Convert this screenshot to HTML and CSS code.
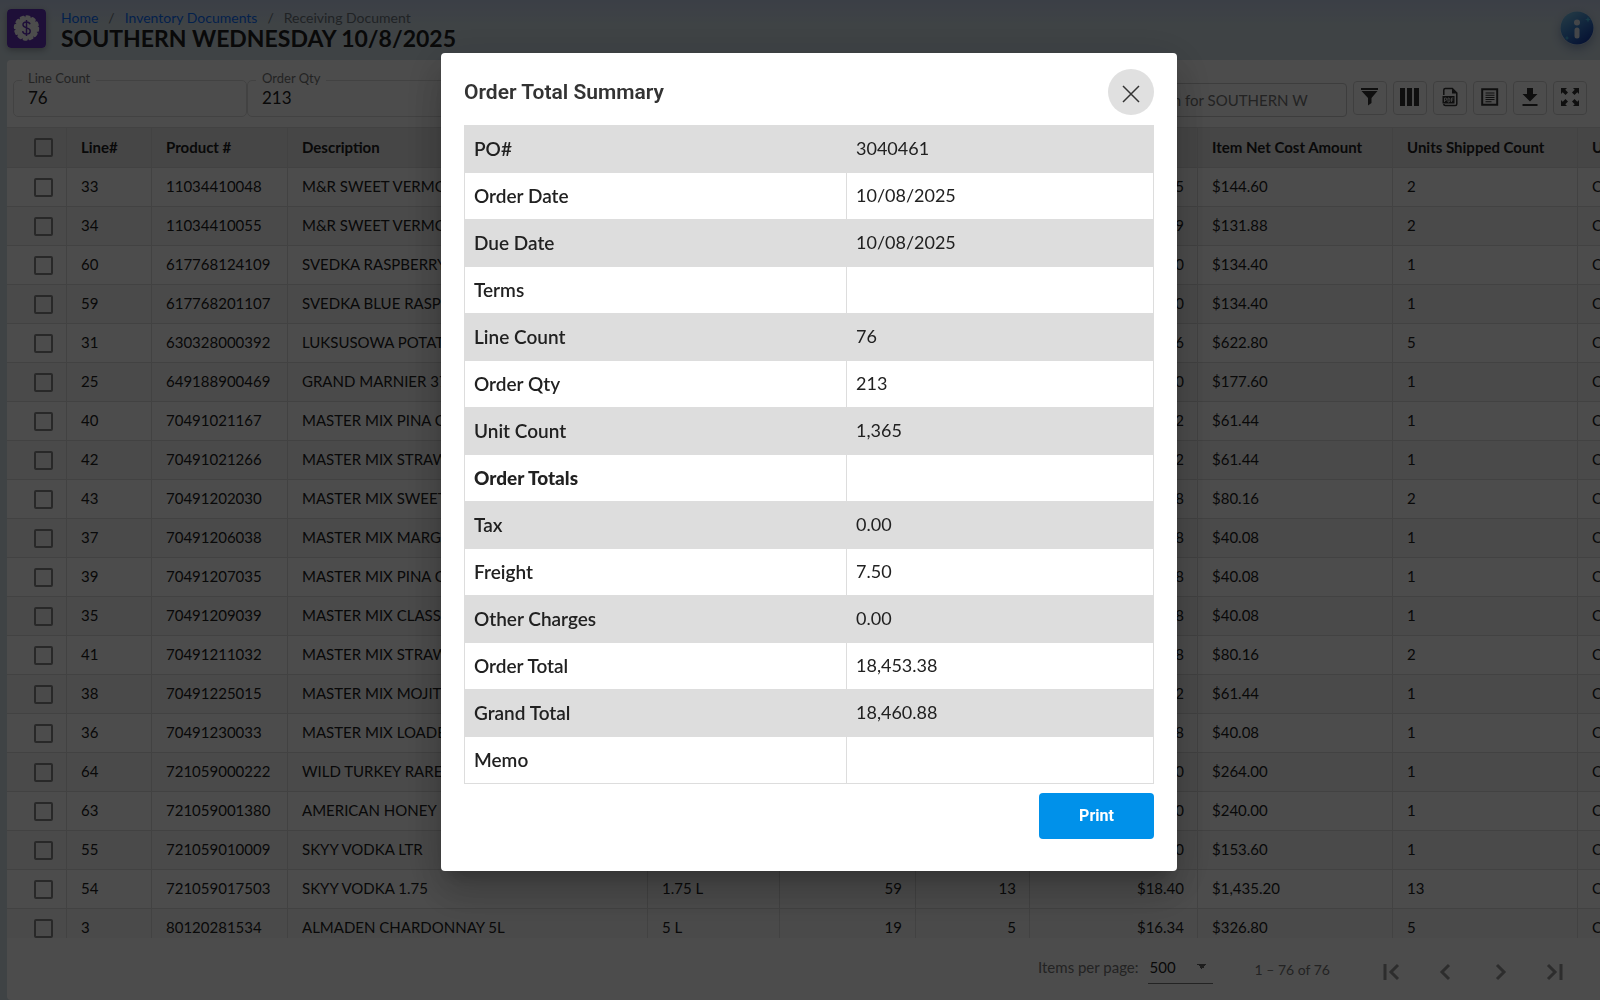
FILE: index.html
```html
<!DOCTYPE html>
<html lang="en">
<head>
<meta charset="utf-8">
<title>Receiving Document</title>
<link rel="stylesheet" href="styles.css">
</head>
<body>
<div class="app">
  <header class="topbar">
    <svg class="app-icon" viewBox="0 0 39 39" aria-hidden="true">
      <rect width="39" height="39" rx="4" fill="#6634bc"/>
      <circle cx="19.500" cy="19" r="11" fill="#fff"/>
      <circle cx="19.500" cy="19" r="11.200" fill="none" stroke="#fff" stroke-width="3" stroke-linecap="round" stroke-dasharray="2.400 3.465"/>
      <path d="M23 15.300c-.4-1.500-1.700-2.300-3.500-2.300-2 0-3.500 1-3.500 2.800 0 4 7.200 2.200 7.200 6.100 0 1.900-1.600 3.100-3.700 3.100-2.100 0-3.600-1-3.900-2.800M19.500 11v16" fill="none" stroke="#6634bc" stroke-width="1.500"/>
    </svg>
    <div class="heading">
      <nav class="crumbs" aria-label="Breadcrumb">
        <a href="#">Home</a><span>/</span><a href="#">Inventory Documents</a><span>/</span><span>Receiving Document</span>
      </nav>
      <h1>SOUTHERN WEDNESDAY 10/8/2025</h1>
    </div>
    <button class="info" aria-label="Information">
      <svg viewBox="0 0 34 34" aria-hidden="true">
        <defs><linearGradient id="ball" x1=".1" y1="0" x2=".8" y2="1"><stop offset="0" stop-color="#7fc8e8"/><stop offset=".5" stop-color="#3d83d0"/><stop offset="1" stop-color="#1238a8"/></linearGradient></defs>
        <circle cx="17" cy="17" r="16.500" fill="url(#ball)"/>
        <circle cx="17" cy="11.500" r="3" fill="#e4ecf5"/>
        <rect x="14.500" y="16.500" width="5" height="11" rx="2.500" fill="#e4ecf5"/>
        <path d="M28 5.500l.8 2.200 2.200.8-2.200.8-.8 2.200-.8-2.200-2.200-.8 2.200-.8zM7 24.500l.6 1.900 1.900.6-1.900.6-.6 1.900-.6-1.900-1.900-.6 1.900-.6z" fill="#4fc8ee"/>
      </svg>
    </button>
  </header>
  <main class="panel">
    <div class="toolbar">
      <fieldset class="field"><legend><label for="lines">Line Count</label></legend><input id="lines" value="76" readonly></fieldset>
      <fieldset class="field"><legend><label for="qty">Order Qty</label></legend><input id="qty" value="213" readonly></fieldset>
      <input class="search" type="text" aria-label="Search" placeholder="Search for SOUTHERN WEDNESDAY 10/8/2025">
      <div class="tools">
        <button class="tool" aria-label="Filter"><svg viewBox="0 0 20 20"><path d="M1 1h17v2H1zM1.500 4h16L11.500 11v5L8 18.500V11z"/></svg></button>
        <button class="tool" aria-label="Columns"><svg viewBox="0 0 20 20"><path d="M0 1h5v18H0zM7 1h5v18H7zM14 1h5v18h-5z"/></svg></button>
        <button class="tool" aria-label="Export PDF"><svg viewBox="0 0 20 20"><path d="M3.800 8V3a1.500 1.500 0 0 1 1.500-1.500h7l4.500 4.500v11a1.500 1.500 0 0 1-1.500 1.500h-10a1.500 1.500 0 0 1-1.500-1.500" fill="none" stroke="currentColor" stroke-width="1.500"/><path d="M12 1.500l5 5h-5zM2.500 9h12v7.500h-12z"/><path d="M4.500 15v-4h1.300q1 0 1 1.200t-1 1.200H4.500M8 11v4h.8q1.200 0 1.200-2t-1.200-2zM11.500 15v-4H13.500M11.500 13h1.700" fill="none" stroke="#fff" stroke-width=".8"/></svg></button>
        <button class="tool" aria-label="Details"><svg viewBox="0 0 20 20"><path d="M2.200 2.200h15v15.600h-15z" fill="none" stroke="currentColor" stroke-width="2"/><path d="M5.500 5.500h9v1h-9zM5.500 7.700h9v1h-9zM5.500 9.900h9v1h-9zM5.500 12.100h9v1h-9zM5.500 14.300h6v1h-6z"/></svg></button>
        <button class="tool" aria-label="Download"><svg viewBox="0 0 20 20"><path d="M7 1h6v6h4.500L10 14.500 2.500 7H7zM2.500 17h15v2h-15z"/></svg></button>
        <button class="tool" aria-label="Full screen"><svg viewBox="0 0 20 20"><path d="M1 1h6L5.300 2.700 8 5.500 5.500 8 2.700 5.300 1 7zM19 1v6l-1.700-1.700L14.500 8 12 5.500l2.700-2.800L13 1zM1 19v-6l1.700 1.700L5.500 12 8 14.500l-2.700 2.800L7 19zM19 19h-6l1.700-1.700L12 14.500l2.500-2.500 2.800 2.700L19 13z"/></svg></button>
      </div>
    </div>
    <div class="grid-wrap">
      <table class="grid">
        <colgroup><col class="c-check"><col class="c-line"><col class="c-prod"><col class="c-desc"><col class="c-size"><col class="c-hand"><col class="c-qty"><col class="c-cost"><col class="c-net"><col class="c-ship"><col class="c-unit"></colgroup>
        <thead><tr><th><input type="checkbox" aria-label="Select all"></th><th>Line#</th><th>Product #</th><th>Description</th><th>Size</th><th>On Hand</th><th>Qty</th><th>Cost</th><th>Item Net Cost Amount</th><th>Units Shipped Count</th><th>Unit Type</th></tr></thead>
        <tbody>
<tr><td><input type="checkbox" aria-label="Line 33"></td><td>33</td><td>11034410048</td><td>M&amp;R SWEET VERMOUTH</td><td>750 ML</td><td>6</td><td>2</td><td>$12.05</td><td>$144.60</td><td>2</td><td>CASE</td></tr>
<tr><td><input type="checkbox" aria-label="Line 34"></td><td>34</td><td>11034410055</td><td>M&amp;R SWEET VERMOUTH</td><td>1 L</td><td>6</td><td>2</td><td>$10.99</td><td>$131.88</td><td>2</td><td>CASE</td></tr>
<tr><td><input type="checkbox" aria-label="Line 60"></td><td>60</td><td>617768124109</td><td>SVEDKA RASPBERRY</td><td>1 L</td><td>6</td><td>1</td><td>$11.20</td><td>$134.40</td><td>1</td><td>CASE</td></tr>
<tr><td><input type="checkbox" aria-label="Line 59"></td><td>59</td><td>617768201107</td><td>SVEDKA BLUE RASPBERRY</td><td>1 L</td><td>6</td><td>1</td><td>$11.20</td><td>$134.40</td><td>1</td><td>CASE</td></tr>
<tr><td><input type="checkbox" aria-label="Line 31"></td><td>31</td><td>630328000392</td><td>LUKSUSOWA POTATO</td><td>1.75 L</td><td>6</td><td>5</td><td>$20.76</td><td>$622.80</td><td>5</td><td>CASE</td></tr>
<tr><td><input type="checkbox" aria-label="Line 25"></td><td>25</td><td>649188900469</td><td>GRAND MARNIER 375</td><td>375 ML</td><td>6</td><td>1</td><td>$29.60</td><td>$177.60</td><td>1</td><td>CASE</td></tr>
<tr><td><input type="checkbox" aria-label="Line 40"></td><td>40</td><td>70491021167</td><td>MASTER MIX PINA COLADA</td><td>1.75 L</td><td>6</td><td>1</td><td>$5.12</td><td>$61.44</td><td>1</td><td>CASE</td></tr>
<tr><td><input type="checkbox" aria-label="Line 42"></td><td>42</td><td>70491021266</td><td>MASTER MIX STRAWBERRY</td><td>1 L</td><td>6</td><td>1</td><td>$5.12</td><td>$61.44</td><td>1</td><td>CASE</td></tr>
<tr><td><input type="checkbox" aria-label="Line 43"></td><td>43</td><td>70491202030</td><td>MASTER MIX SWEET</td><td>1.75 L</td><td>6</td><td>2</td><td>$6.68</td><td>$80.16</td><td>2</td><td>CASE</td></tr>
<tr><td><input type="checkbox" aria-label="Line 37"></td><td>37</td><td>70491206038</td><td>MASTER MIX MARGARITA</td><td>1.75 L</td><td>6</td><td>1</td><td>$6.68</td><td>$40.08</td><td>1</td><td>CASE</td></tr>
<tr><td><input type="checkbox" aria-label="Line 39"></td><td>39</td><td>70491207035</td><td>MASTER MIX PINA COLADA</td><td>1.75 L</td><td>6</td><td>1</td><td>$6.68</td><td>$40.08</td><td>1</td><td>CASE</td></tr>
<tr><td><input type="checkbox" aria-label="Line 35"></td><td>35</td><td>70491209039</td><td>MASTER MIX CLASSIC</td><td>1.75 L</td><td>6</td><td>1</td><td>$6.68</td><td>$40.08</td><td>1</td><td>CASE</td></tr>
<tr><td><input type="checkbox" aria-label="Line 41"></td><td>41</td><td>70491211032</td><td>MASTER MIX STRAWBERRY</td><td>1.75 L</td><td>6</td><td>2</td><td>$6.68</td><td>$80.16</td><td>2</td><td>CASE</td></tr>
<tr><td><input type="checkbox" aria-label="Line 38"></td><td>38</td><td>70491225015</td><td>MASTER MIX MOJITO</td><td>1 L</td><td>6</td><td>1</td><td>$5.12</td><td>$61.44</td><td>1</td><td>CASE</td></tr>
<tr><td><input type="checkbox" aria-label="Line 36"></td><td>36</td><td>70491230033</td><td>MASTER MIX LOADED</td><td>1.75 L</td><td>6</td><td>1</td><td>$6.68</td><td>$40.08</td><td>1</td><td>CASE</td></tr>
<tr><td><input type="checkbox" aria-label="Line 64"></td><td>64</td><td>721059000222</td><td>WILD TURKEY RARE</td><td>1 L</td><td>6</td><td>1</td><td>$22.00</td><td>$264.00</td><td>1</td><td>CASE</td></tr>
<tr><td><input type="checkbox" aria-label="Line 63"></td><td>63</td><td>721059001380</td><td>AMERICAN HONEY</td><td>1 L</td><td>6</td><td>1</td><td>$20.00</td><td>$240.00</td><td>1</td><td>CASE</td></tr>
<tr><td><input type="checkbox" aria-label="Line 55"></td><td>55</td><td>721059010009</td><td>SKYY VODKA LTR</td><td>1 L</td><td>6</td><td>1</td><td>$12.80</td><td>$153.60</td><td>1</td><td>CASE</td></tr>
<tr><td><input type="checkbox" aria-label="Line 54"></td><td>54</td><td>721059017503</td><td>SKYY VODKA 1.75</td><td>1.75 L</td><td>59</td><td>13</td><td>$18.40</td><td>$1,435.20</td><td>13</td><td>CASE</td></tr>
<tr><td><input type="checkbox" aria-label="Line 3"></td><td>3</td><td>80120281534</td><td>ALMADEN CHARDONNAY 5L</td><td>5 L</td><td>19</td><td>5</td><td>$16.34</td><td>$326.80</td><td>5</td><td>CASE</td></tr>
        </tbody>
      </table>
    </div>
    <footer class="pager">
      <label for="size">Items per page:</label>
      <select id="size"><option>500</option></select>
      <span class="range">1 – 76 of 76</span>
      <div class="pages">
        <button aria-label="First page"><svg viewBox="0 0 24 24"><path d="M5 4v16M18 5l-7 7 7 7"/></svg></button>
        <button aria-label="Previous page"><svg viewBox="0 0 24 24"><path d="M15 5l-7 7 7 7"/></svg></button>
        <button aria-label="Next page"><svg viewBox="0 0 24 24"><path d="M9 5l7 7-7 7"/></svg></button>
        <button aria-label="Last page"><svg viewBox="0 0 24 24"><path d="M6 5l7 7-7 7M19 4v16"/></svg></button>
      </div>
    </footer>
  </main>
</div>
<div class="backdrop">
  <section class="dialog" role="dialog" aria-modal="true" aria-labelledby="dialog-title">
    <div class="dialog-head">
      <h2 id="dialog-title">Order Total Summary</h2>
      <button class="close" aria-label="Close"><svg viewBox="0 0 18 18"><path d="M1 1l16 16M17 1L1 17"/></svg></button>
    </div>
    <table class="summary">
      <colgroup><col class="s-name"><col></colgroup>
      <tbody>
        <tr><th scope="row">PO#</th><td>3040461</td></tr>
        <tr><th scope="row">Order Date</th><td>10/08/2025</td></tr>
        <tr><th scope="row">Due Date</th><td>10/08/2025</td></tr>
        <tr><th scope="row">Terms</th><td></td></tr>
        <tr><th scope="row">Line Count</th><td>76</td></tr>
        <tr><th scope="row">Order Qty</th><td>213</td></tr>
        <tr><th scope="row">Unit Count</th><td>1,365</td></tr>
        <tr><th scope="row" class="strong">Order Totals</th><td></td></tr>
        <tr><th scope="row">Tax</th><td>0.00</td></tr>
        <tr><th scope="row">Freight</th><td>7.50</td></tr>
        <tr><th scope="row">Other Charges</th><td>0.00</td></tr>
        <tr><th scope="row">Order Total</th><td>18,453.38</td></tr>
        <tr><th scope="row">Grand Total</th><td>18,460.88</td></tr>
        <tr><th scope="row">Memo</th><td></td></tr>
      </tbody>
    </table>
    <button class="print">Print</button>
  </section>
</div>
</body>
</html>
```

FILE: styles.css
```css
* { box-sizing: border-box; }
body {
  margin: 0;
  font-family: Lato, "Open Sans", sans-serif;
  font-size: 15px;
  color: #212121;
  overflow: hidden;
}
button { font: inherit; color: inherit; padding: 0; border: 0; background: none; }
h1, h2 { margin: 0; }

.app {
  height: 100vh;
  display: flex;
  flex-direction: column;
  padding-left: 7px;
  background: linear-gradient(#c6d2ea 0, #d2e0e8 24px, #d2e0e8 100%);
}
.topbar { height: 60px; flex: none; display: flex; align-items: flex-start; padding: 9px 6px 0 0; }
.app-icon { width: 39px; height: 39px; margin-right: 15px; border-radius: 4px; box-shadow: 0 2px 6px rgba(0, 0, 0, .3); }
.heading { flex: 1; }
.crumbs { display: flex; gap: 10px; font-size: 14px; line-height: 18px; color: #6c757d; }
.crumbs a { color: #0d6efd; text-decoration: none; }
h1 { font-size: 23px; line-height: 23px; font-weight: 700; }
.info { width: 34px; height: 34px; margin-top: 2px; border-radius: 50%; box-shadow: 0 4px 10px rgba(0, 40, 120, .3); }
.info svg { display: block; }

.panel { flex: 1; min-height: 0; display: flex; flex-direction: column; background: #fff; border-radius: 4px 0 0 4px; }
.toolbar { height: 67px; flex: none; display: flex; align-items: flex-start; padding: 10px 13px 0 6px; }
.field { width: 234px; height: 47px; margin: 0; padding: 0 14px; border: 1px solid #ddd; border-radius: 5px; min-width: 0; }
.field legend { margin-left: -6px; padding: 0 6px 4px; font-size: 13px; line-height: 16px; color: #777; }
.field input { width: 100%; height: 22px; margin-top: -4px; padding: 0; border: 0; background: none; font: inherit; font-size: 17px; color: #212121; display: block; }
.search { width: 225px; height: 34px; margin: 13px 6px 0 auto; padding: 0 38px 0 14px; border: 1px solid #ccc; border-radius: 4px; background: none; font: inherit; appearance: none; }
.search::placeholder { color: #757575; }
.tools { display: flex; gap: 6px; margin-top: 11px; }
.tool { width: 34px; height: 34px; border: 1px solid #d4d4d4; border-radius: 4px; display: flex; justify-content: center; align-items: flex-start; padding-top: 5px; color: #333; }
.tool svg { width: 20px; height: 20px; fill: currentColor; }

.grid-wrap { flex: 1; min-height: 0; overflow: hidden; border-top: 1px solid #dcdcdc; }
.grid { width: 1778px; table-layout: fixed; border-collapse: separate; border-spacing: 0; }
.c-check { width: 60px; } .c-line { width: 85px; } .c-prod { width: 136px; } .c-desc { width: 360px; }
.c-size { width: 132px; } .c-hand { width: 136px; } .c-qty { width: 114px; } .c-cost { width: 168px; }
.c-net { width: 195px; } .c-ship { width: 185px; }
.grid th, .grid td { height: 39px; padding: 0 13px 2px 14px; text-align: left; white-space: nowrap; border-right: 1px solid #dcdcdc; border-bottom: 1px solid #dcdcdc; }
.grid th { height: 40px; font-weight: 700; background: #eaeaea; }
.grid tbody tr:nth-child(even) { background: #f8f8f8; }
.grid td:nth-child(6), .grid td:nth-child(7), .grid td:nth-child(8) { text-align: right; }
.grid th:first-child, .grid td:first-child { padding: 0 0 0 27px; }
.grid input { appearance: none; display: block; width: 19px; height: 19px; margin: 0; border: 2px solid #858585; border-radius: 2px; }

.pager { height: 62px; flex: none; display: flex; align-items: center; justify-content: flex-end; padding: 0 34px 4px 0; color: #757575; }
.pager select {
  width: 65px; height: 34px; margin: 0 42px 0 9px; padding: 0 0 0 2px; appearance: none;
  border: 0; border-bottom: 1px solid #757575; border-radius: 0; font: inherit; color: #212121;
  background: linear-gradient(45deg, transparent 50%, #616161 50%) 49px 14px / 5px 5px no-repeat, linear-gradient(-45deg, transparent 50%, #616161 50%) 54px 14px / 5px 5px no-repeat;
}
.range { font-size: 14px; padding-top: 4px; }
.pages { display: flex; gap: 30px; margin: 10px 0 0 50px; }
.pages button, .pages svg { width: 24px; height: 24px; display: block; }
.pages path { fill: none; stroke: #969696; stroke-width: 3; }

.backdrop { position: fixed; inset: 0; background: rgba(0, 0, 0, .7); display: flex; justify-content: center; align-items: flex-start; padding: 53px 0 0 18px; }
.dialog {
  width: 736px; padding: 16px 23px 32px; display: flex; flex-direction: column; background: #fff; border-radius: 4px;
  box-shadow: 0 11px 15px -7px rgba(0, 0, 0, .2), 0 24px 38px 3px rgba(0, 0, 0, .14), 0 9px 46px 8px rgba(0, 0, 0, .12);
}
.dialog-head { display: flex; justify-content: space-between; align-items: center; margin-bottom: 10px; }
h2 { font-family: Roboto, sans-serif; font-size: 21px; line-height: 28px; font-weight: 600; color: #333; }
.close { width: 46px; height: 46px; border-radius: 50%; background: #e0e0e0; display: grid; place-items: center; padding-top: 3px; }
.close svg { width: 18px; height: 18px; fill: none; stroke: #333; stroke-width: 1.500; }
.summary { width: 100%; table-layout: fixed; border-collapse: collapse; font-size: 18px; }
.s-name { width: 382px; }
.summary th, .summary td { height: 47px; padding: 0 9px 2px; border: 1px solid #ddd; text-align: left; font-weight: 400; }
.summary th { font-size: 19px; font-weight: 600; }
.summary .strong { font-weight: 900; }
.summary tr:nth-child(odd) { background: #ddd; }
.print { align-self: flex-end; width: 115px; height: 46px; margin-top: 9px; padding-bottom: 2px; border-radius: 4px; background: #0091ea; color: #fff; font-family: Roboto, sans-serif; font-size: 16px; font-weight: 700; }
```
